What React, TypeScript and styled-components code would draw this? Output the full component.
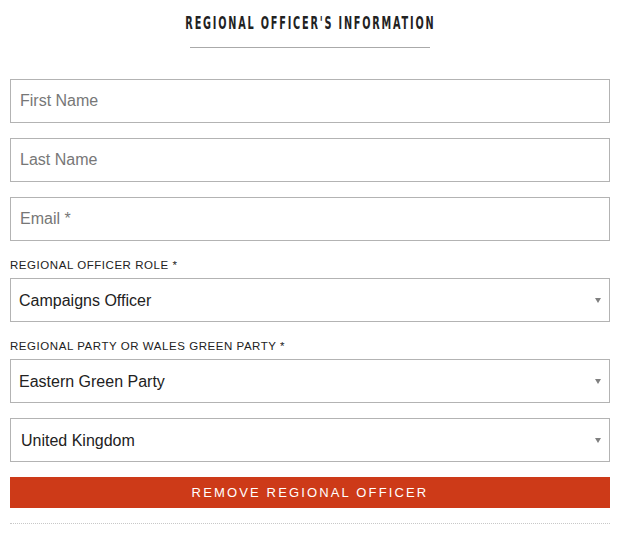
import React from "react";
import styled, { createGlobalStyle } from "styled-components";

const GlobalStyle = createGlobalStyle`
  body {
    margin: 0;
    background: #ffffff;
    font-family: "Liberation Sans", Arial, sans-serif;
  }
`;

const Page = styled.div`
  width: 600px;
  padding: 0 10px;
`;

const Heading = styled.h2`
  margin: 0;
  padding-top: 14px;
  height: 18px;
  text-align: center;
  line-height: 18px;
`;

const HeadingText = styled.span`
  display: inline-block;
  vertical-align: top;
  line-height: 18px;
  font-family: "DejaVu Sans Condensed", "Liberation Sans", sans-serif;
  font-weight: bold;
  font-size: 18px;
  letter-spacing: 3px;
  color: #222;
  white-space: nowrap;
  transform: scaleX(0.6);
`;

const Rule = styled.hr`
  width: 240px;
  margin: 15px auto 31px;
  border: none;
  border-top: 1px solid #aaaaaa;
`;

const Form = styled.form`
  display: flex;
  flex-direction: column;
  gap: 15px;
`;

const TextInput = styled.input`
  box-sizing: border-box;
  width: 100%;
  height: 44px;
  padding: 0 9px;
  border: 1px solid #b3b3b3;
  border-radius: 0;
  font-family: "Liberation Sans", Arial, sans-serif;
  font-size: 16px;
  color: #333;
  outline: none;

  &::placeholder {
    color: #777;
  }
`;

const Field = styled.div`
  display: flex;
  flex-direction: column;
  gap: 6px;
  margin-top: ${(p: { $top?: number }) => p.$top ?? 0}px;
`;

const Label = styled.label`
  font-size: 11.5px;
  letter-spacing: 0.55px;
  color: #222;
  text-transform: uppercase;
  line-height: 13px;
`;

const SelectWrap = styled.div`
  position: relative;

  &::after {
    content: "";
    position: absolute;
    right: 9px;
    top: 20px;
    border-left: 3px solid transparent;
    border-right: 3px solid transparent;
    border-top: 5px solid #808080;
    pointer-events: none;
  }
`;

const Select = styled.select`
  box-sizing: border-box;
  width: 100%;
  height: 44px;
  padding: 0 ${(p: { $pad?: number }) => p.$pad ?? 8}px;
  border: 1px solid #b3b3b3;
  border-radius: 0;
  background: #fff;
  appearance: none;
  font-family: "Liberation Sans", Arial, sans-serif;
  font-size: 16px;
  color: #222;
  outline: none;
`;

const RemoveButton = styled.button`
  height: 31px;
  border: none;
  background: #cd3a18;
  color: #fff;
  font-family: "Liberation Sans", Arial, sans-serif;
  font-size: 13px;
  letter-spacing: 2.15px;
  text-transform: uppercase;
  cursor: pointer;
`;

const Divider = styled.div`
  border-top: 1px dotted #c8c8c8;
`;

export default function App() {
  return (
    <Page>
      <GlobalStyle />
      <Heading>
        <HeadingText>REGIONAL OFFICER'S INFORMATION</HeadingText>
      </Heading>
      <Rule />
      <Form onSubmit={(e) => e.preventDefault()}>
        <TextInput type="text" placeholder="First Name" />
        <TextInput type="text" placeholder="Last Name" />
        <TextInput type="email" placeholder="Email *" />
        <Field $top={3}>
          <Label>Regional Officer Role *</Label>
          <SelectWrap>
            <Select defaultValue="Campaigns Officer">
              <option>Campaigns Officer</option>
            </Select>
          </SelectWrap>
        </Field>
        <Field $top={3}>
          <Label>Regional Party or Wales Green Party *</Label>
          <SelectWrap>
            <Select defaultValue="Eastern Green Party">
              <option>Eastern Green Party</option>
            </Select>
          </SelectWrap>
        </Field>
        <SelectWrap>
          <Select $pad={10} defaultValue="United Kingdom">
            <option>United Kingdom</option>
          </Select>
        </SelectWrap>
        <RemoveButton type="button">Remove Regional Officer</RemoveButton>
        <Divider />
      </Form>
    </Page>
  );
}
